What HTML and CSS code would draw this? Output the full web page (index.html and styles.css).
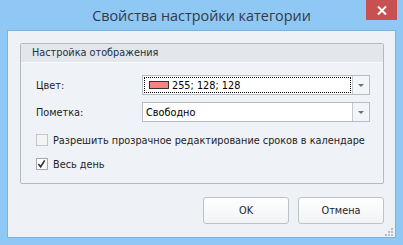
FILE: index.html
```html
<!DOCTYPE html>
<html>
<head>
<meta charset="utf-8">
<link rel="stylesheet" href="styles.css">
</head>
<body>
<div class="window">
  <div class="titlebar">
    <div class="title">Свойства настройки категории</div>
    <div class="close">
      <svg width="10" height="9" viewBox="0 0 10 9"><path d="M1 0.5 L9 8.5 M9 0.5 L1 8.5" stroke="#fff" stroke-width="2"/></svg>
    </div>
  </div>
  <div class="client">
    <div class="group">
      <div class="group-head">Настройка отображения</div>
      <div class="group-body">
        <div class="form">
          <div class="label">Цвет:</div>
          <div class="combo">
            <div class="combo-field focused"><span class="swatch"></span><span>255; 128; 128</span></div>
            <div class="combo-btn"><span class="arrow"></span></div>
          </div>
          <div class="label">Пометка:</div>
          <div class="combo">
            <div class="combo-field"><span>Свободно</span></div>
            <div class="combo-btn"><span class="arrow"></span></div>
          </div>
        </div>
        <div class="check-row">
          <span class="checkbox disabled"></span>
          <span>Разрешить прозрачное редактирование сроков в календаре</span>
        </div>
        <div class="check-row">
          <span class="checkbox"><svg width="11" height="11" viewBox="0 0 11 11"><path d="M1.5 5 L4 8 L8.5 1" fill="none" stroke="#333" stroke-width="1.8"/></svg></span>
          <span>Весь день</span>
        </div>
      </div>
    </div>
    <div class="buttons">
      <div class="btn">OK</div>
      <div class="btn">Отмена</div>
    </div>
    <div class="grip">
      <svg width="9" height="9" viewBox="0 0 9 9" fill="#b9bec4"><rect x="6" y="0" width="2" height="2"/><rect x="3" y="3" width="2" height="2"/><rect x="6" y="3" width="2" height="2"/><rect x="0" y="6" width="2" height="2"/><rect x="3" y="6" width="2" height="2"/><rect x="6" y="6" width="2" height="2"/></svg>
    </div>
  </div>
</div>
</body>
</html>
```

FILE: styles.css
```css
html, body {
  margin: 0;
  padding: 0;
}
body {
  width: 403px;
  height: 245px;
  overflow: hidden;
  font-family: "DejaVu Sans Condensed", "Liberation Sans", sans-serif;
  font-size: 10.8px;
  color: #1e1e1e;
  white-space: nowrap;
}
.window {
  width: 403px;
  height: 245px;
  box-sizing: border-box;
  background: #8fc7f5;
  padding: 0 7px 8px 7px;
  display: flex;
  flex-direction: column;
}
.titlebar {
  height: 30px;
  display: flex;
  justify-content: center;
  position: relative;
}
.title {
  font-family: "Open Sans", "Noto Sans", sans-serif;
  font-size: 14.4px;
  color: #333b45;
  line-height: 31px;
}
.close {
  position: absolute;
  right: -1px;
  top: 0;
  width: 31px;
  height: 20px;
  background: #c75050;
  display: flex;
  align-items: center;
  justify-content: center;
}
.client {
  flex: 1;
  position: relative;
  background: #eef2f7;
  border: 1px solid #7fb1de;
  padding: 12px 11px 13px 12px;
  display: flex;
  flex-direction: column;
}
.group {
  border: 1px solid #b3b9c1;
  border-radius: 2px;
  height: 141px;
  box-sizing: border-box;
  background: #eff2f6;
}
.group-head {
  height: 18px;
  line-height: 18px;
  background: #e3e7ec;
  border-bottom: 1px solid #f7f9fb;
  padding-left: 11px;
  color: #1e2f45;
}
.group-body {
  padding: 12px 13px 0 15px;
}
.form {
  display: grid;
  grid-template-columns: 106px 228px;
  row-gap: 7px;
  align-items: center;
}
.combo {
  height: 20px;
  border: 1px solid #b5bcc4;
  background: #fff;
  box-sizing: border-box;
  display: flex;
}
.combo-field {
  flex: 1;
  display: flex;
  align-items: center;
  gap: 3px;
  padding-left: 3px;
  color: #000;
}
.combo-field.focused {
  margin: 1px;
  padding-left: 5px;
  outline: 1px dotted #000;
  outline-offset: -1px;
}
.swatch {
  width: 18px;
  height: 6px;
  background: #ff8080;
  border: 1px solid #333;
}
.combo-btn {
  width: 16px;
  border-left: 1px solid #c5cad0;
  background: #f3f5f8;
  display: flex;
  align-items: center;
  justify-content: center;
}
.arrow {
  width: 0;
  height: 0;
  border-left: 3px solid transparent;
  border-right: 3px solid transparent;
  border-top: 3px solid #6d737a;
}
.check-row {
  display: flex;
  align-items: center;
  gap: 5px;
  margin-top: 10px;
  height: 14px;
}
.check-row + .check-row {
  margin-top: 10px;
}
.form + .check-row {
  margin-top: 11px;
}
.checkbox {
  width: 12px;
  height: 12px;
  box-sizing: border-box;
  border: 1px solid #a3a9b0;
  background: #fff;
  display: flex;
}
.checkbox.disabled {
  background: #f4f4f4;
  border-color: #c3c7cc;
}
.buttons {
  display: flex;
  justify-content: flex-end;
  gap: 9px;
  margin-top: 13px;
}
.btn {
  width: 86px;
  height: 27px;
  box-sizing: border-box;
  border: 1px solid #bcc2c9;
  border-radius: 3px;
  background: linear-gradient(#ffffff, #f1f3f5);
  display: flex;
  align-items: center;
  justify-content: center;
  color: #1e1e1e;
}
.grip {
  position: absolute;
  right: 1px;
  bottom: 1px;
  width: 9px;
  height: 9px;
}
```
